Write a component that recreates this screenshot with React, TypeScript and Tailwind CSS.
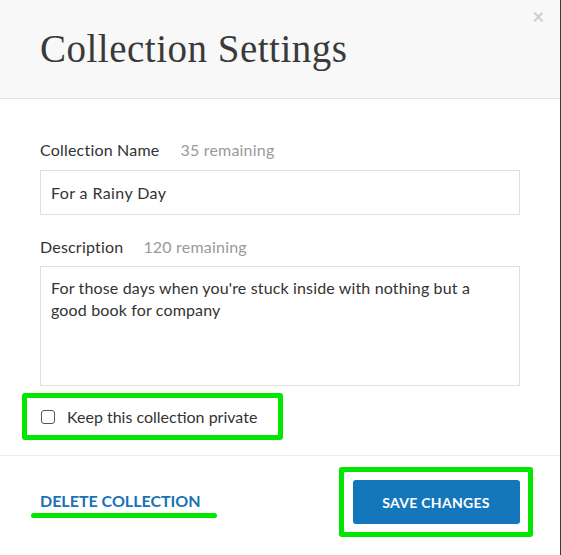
import React from "react";

export default function App() {
  const sans = { fontFamily: "Lato, 'Open Sans', sans-serif" } as React.CSSProperties;
  return (
    <div className="w-[561px] h-[555px] flex bg-white overflow-hidden" style={sans}>
      <div className="flex-1 flex flex-col bg-white">
        <div className="relative h-[99px] bg-[#f8f8f8] border-b border-[#e3e3e3] flex items-center px-10">
          <h1
            className="text-[39px] leading-none text-[#3a3a3a] tracking-[0.5px] -mt-[1px]"
            style={{ fontFamily: "'Liberation Serif', serif" }}
          >
            Collection Settings
          </h1>
          <span className="absolute right-[16px] top-[6px] text-[20px] font-bold text-[#cfcfcf] leading-none">×</span>
        </div>
        <div className="px-10 pt-[41px] flex flex-col">
          <div className="flex items-center gap-[21px] text-[16px] leading-5 tracking-[0.2px]">
            <span className="text-[#333]">Collection Name</span>
            <span className="text-[#9a9a9a]">35 remaining</span>
          </div>
          <div className="mt-[10px] h-[45px] w-[480px] border border-[#dedede] flex items-center px-[10px] text-[16px] tracking-[0.4px] text-[#333]">
            For a Rainy Day
          </div>
          <div className="mt-[22px] flex items-center gap-[20px] text-[16px] leading-5 tracking-[0.2px]">
            <span className="text-[#333]">Description</span>
            <span className="text-[#9a9a9a]">120 remaining</span>
          </div>
          <div className="mt-[9px] h-[120px] w-[480px] border border-[#dedede] pl-[10px] pr-[30px] pt-[10px] text-[16px] leading-[22px] tracking-[0.15px] text-[#333]">
            For those days when you're stuck inside with nothing but a good book for company
          </div>
        </div>
        <div className="ml-[22px] mt-[7px] w-[261px] h-[47px] border-[5px] border-[#00e600] rounded-[3px] flex items-center pl-[14px] gap-3">
          <span className="w-[14px] h-[14px] border-[1.5px] border-[#555] rounded-[3px] bg-white"></span>
          <span className="text-[16px] text-[#333]">Keep this collection private</span>
        </div>
        <div className="mt-[15px] border-t border-[#ececec]"></div>
        <div className="flex items-start justify-between pl-[31px] pr-[27px] pt-[11px]">
          <div className="flex flex-col items-start pt-[26px]">
            <span className="ml-[9px] text-[16px] font-bold text-[#1a72b5] leading-4">DELETE COLLECTION</span>
            <span className="mt-[4px] w-[186px] h-[5px] rounded-full bg-[#00e600]"></span>
          </div>
          <div className="w-[194px] h-[70px] border-[5px] border-[#00e600] rounded-[3px] flex items-center justify-center">
            <div className="w-[167px] h-[44px] bg-[#1477bb] rounded-[3px] flex items-center justify-center text-white text-[14px] font-bold tracking-[0.3px]">
              SAVE CHANGES
            </div>
          </div>
        </div>
      </div>
      <div className="w-[2px] bg-[#3a3a3a]"></div>
    </div>
  );
}
